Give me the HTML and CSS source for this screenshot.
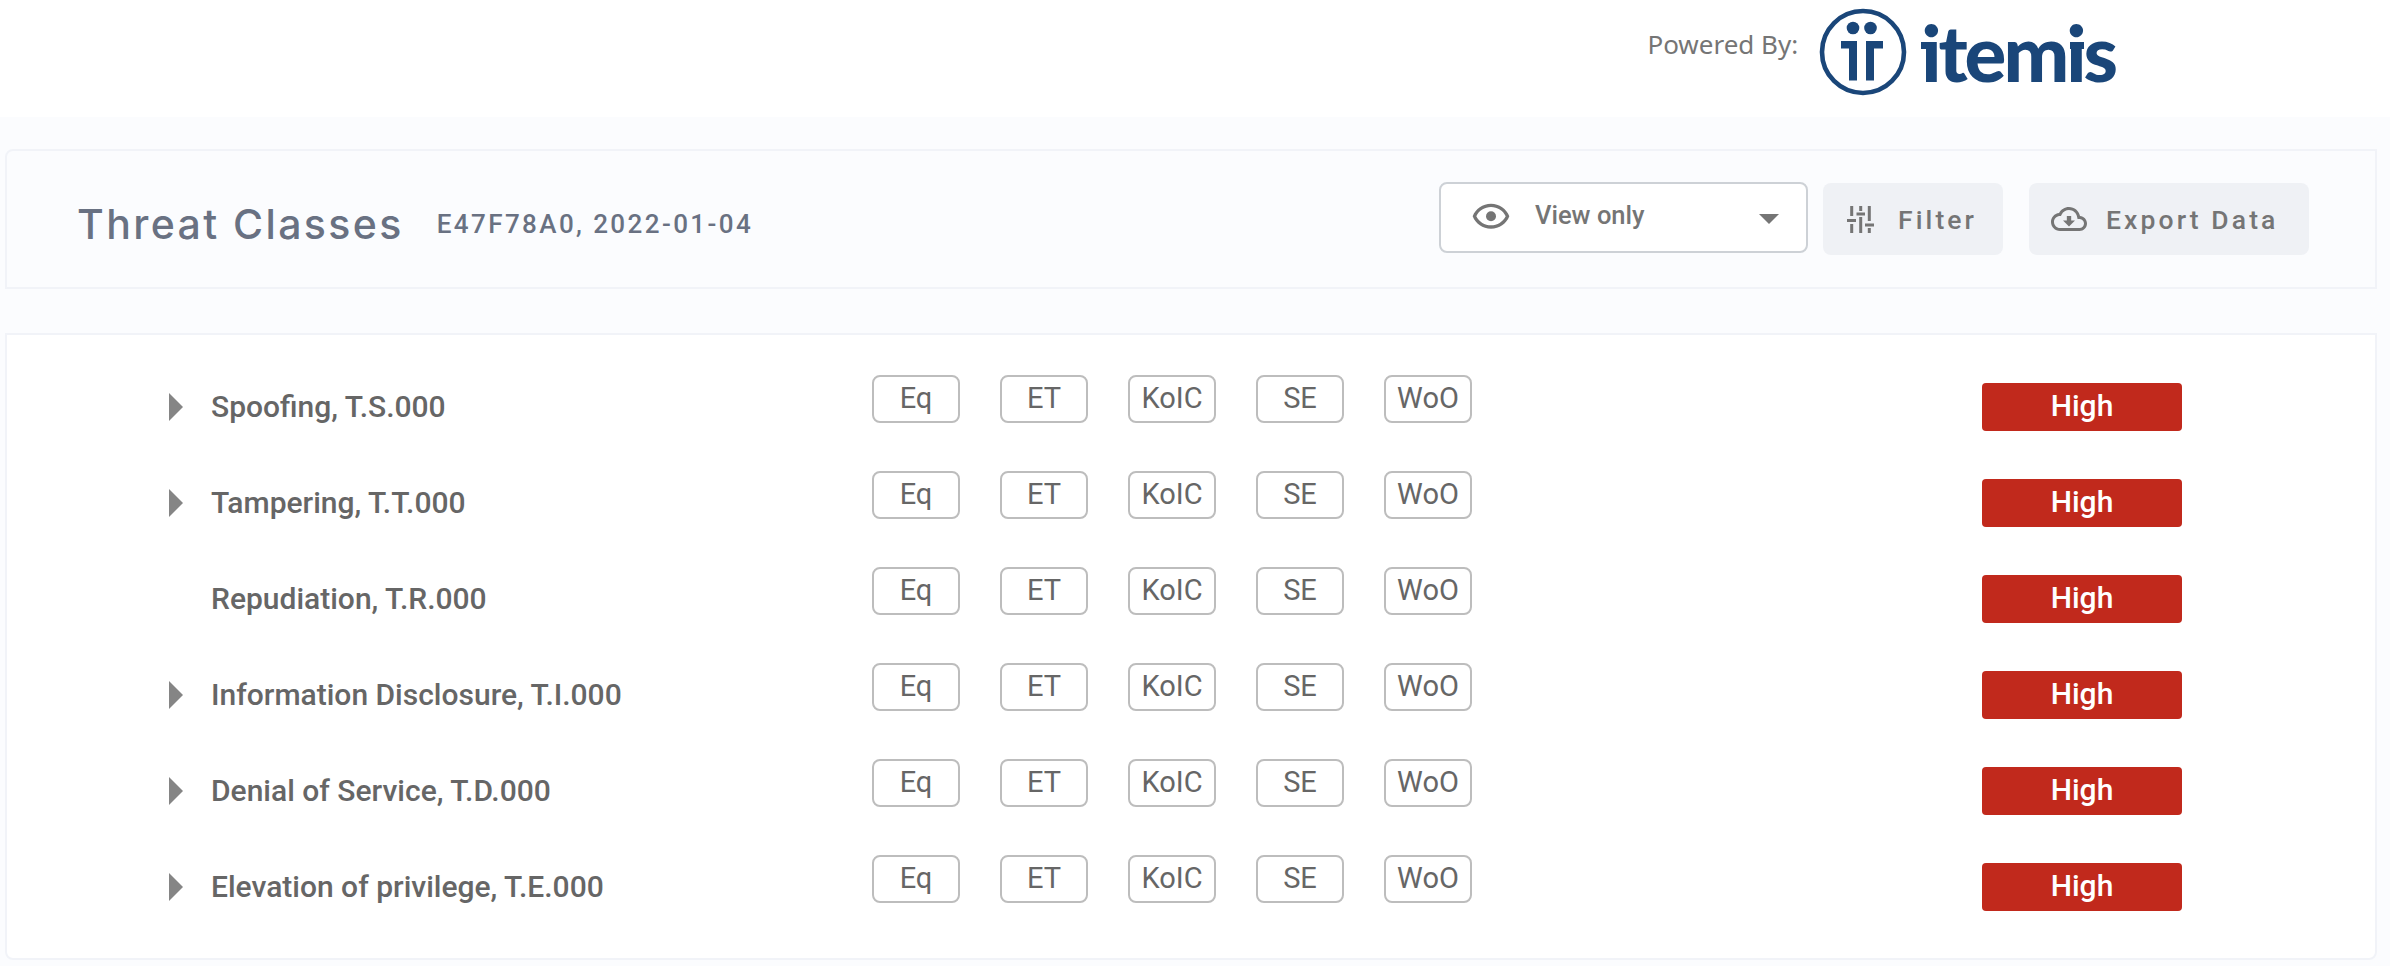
FILE: index.html
```html
<!DOCTYPE html>
<html lang="en">
<head>
<meta charset="utf-8">
<title>Threat Classes</title>
<link rel="stylesheet" href="styles.css">
</head>
<body>
<header class="topbar">
  <span class="powered">Powered By:</span>
  <svg class="logo-mark" viewBox="0 0 90 90" aria-hidden="true">
    <circle cx="45" cy="45" r="41" class="ring"/>
    <circle cx="35" cy="21" r="6.3"/><circle cx="52.5" cy="21" r="6.3"/>
    <rect x="23" y="34" width="16" height="7.5"/><rect x="31" y="34" width="8" height="39.5"/>
    <rect x="48" y="34" width="8" height="39.5"/><rect x="48" y="34" width="17" height="7.5"/>
  </svg>
  <span class="wordmark">itemis</span>
</header>
<main class="page">
  <section class="card head-card">
    <div class="heading">
      <h1 class="title">Threat Classes</h1>
      <span class="subtitle">E47F78A0, 2022-01-04</span>
    </div>
    <div class="actions">
      <div class="select">
        <svg class="eye" viewBox="0 0 24 24" aria-hidden="true"><path d="M12 6c3.79 0 7.17 2.13 8.82 5.5C19.17 14.87 15.79 17 12 17s-7.17-2.13-8.82-5.5C4.83 8.13 8.21 6 12 6m0-2C7 4 2.73 7.11 1 11.5 2.73 15.89 7 19 12 19s9.27-3.11 11-7.5C21.27 7.11 17 4 12 4z"/><circle cx="12" cy="11.5" r="3"/></svg>
        <span class="select-label">View only</span>
        <span class="caret"></span>
      </div>
      <button class="btn btn-filter">
        <svg class="tune" viewBox="0 0 27 27" aria-hidden="true"><path d="M4.7 0v10M0 14.5h9M4.7 18v9M13.7 0v5M9.5 8h8.5M13.7 11v16M22.3 0v15M18 19h9M22.3 22v5"/></svg>
        <span>Filter</span>
      </button>
      <button class="btn btn-export">
        <svg class="cloud" viewBox="0 0 24 24" aria-hidden="true"><path d="M19.35 10.04C18.67 6.59 15.64 4 12 4 9.11 4 6.6 5.64 5.35 8.04 2.34 8.36 0 10.91 0 14c0 3.31 2.69 6 6 6h13c2.76 0 5-2.24 5-5 0-2.64-2.05-4.78-4.65-4.96zM19 18H6c-2.21 0-4-1.79-4-4 0-2.05 1.53-3.76 3.56-3.97l1.07-.11.5-.95C8.08 7.14 9.94 6 12 6c2.62 0 4.88 1.86 5.39 4.43l.3 1.5 1.53.11c1.56.1 2.78 1.41 2.78 2.96 0 1.65-1.35 3-3 3zm-5.55-8h-2.9v3H8l4 4 4-4h-2.55z"/></svg>
        <span>Export Data</span>
      </button>
    </div>
  </section>
  <section class="card list-card">
    <div class="row">
      <span class="arrow"></span><span class="name">Spoofing, T.S.000</span>
      <div class="chips"><span class="chip">Eq</span><span class="chip">ET</span><span class="chip">KoIC</span><span class="chip">SE</span><span class="chip">WoO</span></div>
      <span class="level">High</span>
    </div>
    <div class="row">
      <span class="arrow"></span><span class="name">Tampering, T.T.000</span>
      <div class="chips"><span class="chip">Eq</span><span class="chip">ET</span><span class="chip">KoIC</span><span class="chip">SE</span><span class="chip">WoO</span></div>
      <span class="level">High</span>
    </div>
    <div class="row">
      <span class="arrow arrow-none"></span><span class="name">Repudiation, T.R.000</span>
      <div class="chips"><span class="chip">Eq</span><span class="chip">ET</span><span class="chip">KoIC</span><span class="chip">SE</span><span class="chip">WoO</span></div>
      <span class="level">High</span>
    </div>
    <div class="row">
      <span class="arrow"></span><span class="name">Information Disclosure, T.I.000</span>
      <div class="chips"><span class="chip">Eq</span><span class="chip">ET</span><span class="chip">KoIC</span><span class="chip">SE</span><span class="chip">WoO</span></div>
      <span class="level">High</span>
    </div>
    <div class="row">
      <span class="arrow"></span><span class="name">Denial of Service, T.D.000</span>
      <div class="chips"><span class="chip">Eq</span><span class="chip">ET</span><span class="chip">KoIC</span><span class="chip">SE</span><span class="chip">WoO</span></div>
      <span class="level">High</span>
    </div>
    <div class="row">
      <span class="arrow"></span><span class="name">Elevation of privilege, T.E.000</span>
      <div class="chips"><span class="chip">Eq</span><span class="chip">ET</span><span class="chip">KoIC</span><span class="chip">SE</span><span class="chip">WoO</span></div>
      <span class="level">High</span>
    </div>
  </section>
</main>
</body>
</html>
```

FILE: styles.css
```css
* { box-sizing: border-box; }
html, body { margin: 0; padding: 0; }
body {
  background: #fbfcfe;
  font-family: Roboto, "Liberation Sans", sans-serif;
  height: 966px;
  overflow: hidden;
}

.topbar {
  height: 117px;
  background: #fff;
  display: flex;
  align-items: flex-start;
  padding-right: 275px;
  justify-content: flex-end;
}
.powered {
  font-family: "Noto Sans", "Open Sans", sans-serif;
  font-size: 26px;
  line-height: 32px;
  color: #757575;
  margin-top: 28px;
  margin-right: 20px;
}
.logo-mark { width: 90px; height: 90px; margin-top: 7px; fill: #1a4679; }
.logo-mark .ring { fill: none; stroke: #1a4679; stroke-width: 4.6; }
.wordmark {
  position: relative;
  font-family: Lato, "Open Sans", sans-serif;
  font-weight: 900;
  font-size: 78px;
  letter-spacing: -3px;
  line-height: 90px;
  color: #1a4679;
  margin-left: 13px;
  margin-top: 7px;
}
.wordmark::before,
.wordmark::after {
  content: "";
  position: absolute;
  top: 35px;
  width: 14px;
  height: 7px;
  background: #1a4679;
}
.wordmark::before { left: 0; }
.wordmark::after { right: 31px; }

.page { padding: 32px 13px 0 5px; }
.card { border: 2px solid #f1f3f8; border-radius: 8px; }

.head-card {
  height: 140px;
  display: flex;
  align-items: center;
  justify-content: space-between;
  padding: 0 66px 0 70px;
  margin-bottom: 44px;
  border-bottom-left-radius: 0;
  border-top-right-radius: 0;
  border-bottom-right-radius: 0;
}
.heading { display: flex; align-items: center; gap: 33px; margin-top: 10px; }
.title {
  margin: 0;
  font-family: Inter, "Open Sans", sans-serif;
  font-size: 41px;
  font-weight: 500;
  letter-spacing: 2.4px;
  color: #697182;
}
.subtitle {
  font-size: 26px;
  font-weight: 500;
  letter-spacing: 2.4px;
  color: #697182;
}
.actions { display: flex; align-items: center; }
.select {
  width: 369px;
  height: 71px;
  background: #fff;
  border: 2px solid #cdd1d6;
  border-radius: 8px;
  display: flex;
  align-items: center;
  padding: 0 27px 0 30px;
  margin: -4px 15px 0 0;
}
.eye { width: 40px; height: 40px; fill: #757575; flex: none; }
.select-label {
  font-size: 25.5px;
  font-weight: 500;
  color: #757575;
  margin-left: 24px;
  margin-top: -5px;
  flex: 1;
}
.caret {
  width: 0;
  height: 0;
  border-left: 10px solid transparent;
  border-right: 10px solid transparent;
  border-top: 10px solid #757575;
  margin-top: 4px;
}
.btn {
  height: 72px;
  border: 0;
  border-radius: 8px;
  background: #eff1f5;
  color: #757575;
  display: flex;
  align-items: center;
  font-family: Roboto, "Liberation Sans", sans-serif;
  font-size: 26.5px;
  font-weight: 500;
  letter-spacing: 3.1px;
  padding: 0;
}
.btn-filter { width: 180px; padding-left: 24px; gap: 24px; margin-right: 26px; }
.btn-export { width: 280px; padding-left: 22px; gap: 19px; }
.tune { width: 27px; height: 27px; stroke: #757575; stroke-width: 3; fill: none; flex: none; }
.cloud { width: 36px; height: 36px; fill: #757575; flex: none; }

.list-card {
  height: 627px;
  background: #fff;
  padding-top: 24px;
  border-top-left-radius: 0;
  border-top-right-radius: 0;
}
.row { height: 96px; display: flex; align-items: center; padding-left: 162px; }
.arrow {
  width: 0;
  height: 0;
  border-top: 14px solid transparent;
  border-bottom: 14px solid transparent;
  border-left: 14px solid #858585;
  flex: none;
}
.arrow-none { visibility: hidden; }
.name {
  width: 661px;
  margin-left: 28px;
  margin-bottom: 1px;
  font-size: 30px;
  font-weight: 500;
  color: #666;
  flex: none;
}
.chips { display: flex; gap: 40px; margin-bottom: 16px; flex: none; width: 1110px; }
.chip {
  width: 88px;
  height: 48px;
  border: 2px solid #bdbdbd;
  border-radius: 8px;
  font-size: 29px;
  line-height: 42px;
  text-align: center;
  color: #666;
}
.level {
  width: 200px;
  height: 48px;
  border-radius: 4px;
  background: #c1291c;
  color: #fff;
  font-size: 30px;
  font-weight: 500;
  line-height: 46px;
  text-align: center;
  flex: none;
}
```
